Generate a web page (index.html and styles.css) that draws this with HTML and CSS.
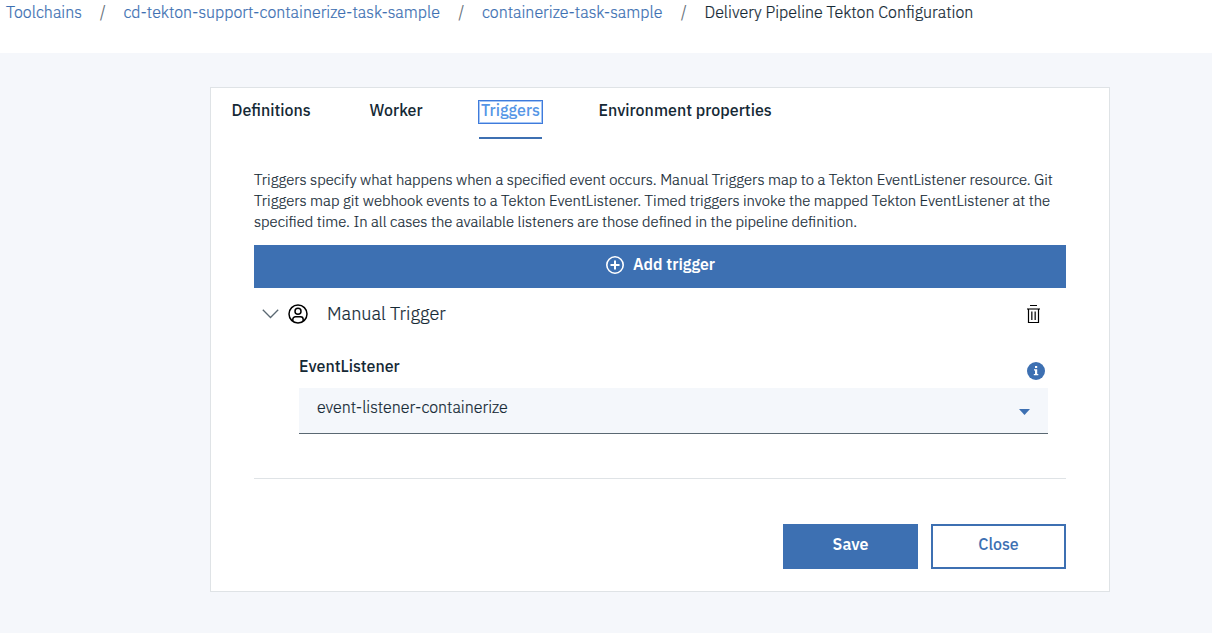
FILE: index.html
```html
<!DOCTYPE html>
<html lang="en">
<head>
<meta charset="utf-8">
<title>Delivery Pipeline Tekton Configuration</title>
<link rel="stylesheet" href="styles.css">
</head>
<body>
<nav class="crumbs">
  <a class="crumb crumb-root">Toolchains</a><span class="slash">/</span>
  <a class="crumb crumb-chain">cd-tekton-support-containerize-task-sample</a><span class="slash">/</span>
  <a class="crumb crumb-pipe">containerize-task-sample</a><span class="slash">/</span>
  <span class="crumb-current">Delivery Pipeline Tekton Configuration</span>
</nav>
<main class="card">
  <div class="tabs">
    <div class="tab tab-definitions">Definitions</div>
    <div class="tab tab-worker">Worker</div>
    <div class="tab tab-active"><span class="focus">Triggers</span></div>
    <div class="tab tab-env">Environment properties</div>
  </div>
  <div class="content">
    <p class="intro">Triggers specify what happens when a specified event occurs. Manual Triggers map to a Tekton EventListener resource. Git<br>Triggers map git webhook events to a Tekton EventListener. Timed triggers invoke the mapped Tekton EventListener at the<br>specified time. In all cases the available listeners are those defined in the pipeline definition.</p>
    <div class="add">
      <svg width="20" height="20" viewBox="0 0 20 20" fill="none" stroke="#fff"><circle cx="10" cy="10" r="8.2" stroke-width="1.6"/><path d="M10 5.5v9M5.5 10h9" stroke-width="2"/></svg>
      <span class="add-label">Add trigger</span>
    </div>
    <div class="trigger">
      <svg class="chevron" width="17" height="10" viewBox="0 0 17 10" fill="none" stroke="#5a6872" stroke-width="1.3"><path d="M.8.8l7.7 7.7L16.200.8"/></svg>
      <svg class="user" width="20" height="20" viewBox="0 0 20 20" fill="none" stroke="#000" stroke-width="1.5"><circle cx="10" cy="10" r="9"/><circle cx="10" cy="7.300" r="3"/><path d="M4.800 17v-1.500a2.700 2.700 0 0 1 2.700-2.700h5a2.700 2.700 0 0 1 2.700 2.700V17"/></svg>
      <span class="trigger-name">Manual Trigger</span>
      <svg class="trash" width="13" height="18" viewBox="0 0 13 18"><path d="M3 .5h7" stroke="#000"/><path d="M0 4h13" stroke="#444" stroke-width="1.500"/><path d="M1.500 4v13.500h10V4" fill="none" stroke="#000" stroke-width="1.200"/><path d="M4.800 6.500v8.500M8.200 6.500v8.500" stroke="#333" stroke-width="1.500"/></svg>
    </div>
    <div class="field-head">
      <span class="field-label">EventListener</span>
      <svg class="info" width="18" height="18" viewBox="0 0 18 18"><circle cx="9" cy="9" r="9" fill="#3d70b2"/><path d="M8 4h2.200v2H8zM7 7.300h3.200v4.700h1.100v1.200H6.800V12H8V8.500H7z" fill="#fff"/></svg>
    </div>
    <div class="select"><span class="select-value">event-listener-containerize</span><svg width="11" height="6" viewBox="0 0 11 6"><path d="M0 0h11L5.500 6z" fill="#3d70b2"/></svg></div>
    <div class="actions">
      <div class="btn save">Save</div>
      <div class="btn close">Close</div>
    </div>
  </div>
</main>
</body>
</html>
```
FILE: styles.css
```css
* { box-sizing: border-box; }
body {
  margin: 0;
  height: 633px;
  overflow: hidden;
  background: #f5f7fb;
  color: #152935;
  font-family: "IBM Plex Sans", Roboto, sans-serif;
  font-size: 16px;
  font-weight: 300;
  line-height: 21px;
}
svg { display: block; flex: none; }
.crumbs, .intro, .select-value, .trigger-name { -webkit-text-stroke: .2px currentColor; }
.crumbs {
  display: flex;
  height: 53px;
  padding: 2px 0 0 6px;
  background: #fff;
  white-space: nowrap;
}
.crumb { color: #3d70b2; }
.crumb-root { width: 94px; }
.crumb-chain { width: 335px; }
.crumb-pipe { width: 199px; }
.slash { width: 23.500px; color: #5a6872; }
.card {
  width: 900px;
  height: 505px;
  margin: 34px 0 0 210px;
  border: 1px solid #dfe3e6;
  background: #fff;
}
.tabs {
  display: flex;
  height: 81px;
  padding: 12px 0 0 20.500px;
  font-weight: 500;
  white-space: nowrap;
}
.tab-definitions { width: 138px; }
.tab-worker { width: 109.500px; }
.tab-active {
  width: 63px;
  height: 39px;
  margin-right: 56.500px;
  border-bottom: 2px solid #3d70b2;
  color: #5596e6;
}
.focus {
  display: block;
  width: 65px;
  height: 24px;
  margin-left: -1px;
  padding-left: 1px;
  border: 1px solid #3f7bdb;
  line-height: 19px;
  padding-left: 2px;
  box-shadow: inset 0 0 0 1px #a5c6f5;
}
.content { padding: 0 43px; }
.intro { height: 76px; margin: 0; font-size: 14.840px; white-space: nowrap; }
.add {
  display: flex;
  justify-content: center;
  height: 43px;
  padding-top: 10px;
  gap: 8px;
  background: #3d70b2;
  color: #fff;
  font-weight: 600;
}
.add-label { line-height: 18px; font-size: 15.800px; }
.trigger { display: flex; height: 68px; padding-left: 8px; }
.chevron { margin-top: 21px; }
.user { margin: 16px 19px 0 9px; }
.trigger-name { font-size: 18.100px; line-height: 24px; margin-top: 13px; }
.trash { margin: 17px 26px 0 auto; }
.field-head { display: flex; justify-content: space-between; height: 32px; padding: 0 21px 0 45px; font-weight: 500; }
.info { margin-top: 6px; }
.select {
  display: flex;
  justify-content: space-between;
  height: 46px;
  margin: 0 18px 0 45px;
  padding: 9px 18px 0;
  border-bottom: 1px solid #5a6872;
  background: #f4f7fb;
}
.select svg { margin-top: 12px; }
.actions {
  display: flex;
  justify-content: flex-end;
  gap: 13px;
  margin-top: 44px;
  padding-top: 45px;
  border-top: 1px solid #dfe3e6;
}
.btn {
  width: 135px;
  height: 45px;
  border: 2px solid #3d70b2;
  line-height: 37px;
  text-align: center;
  font-weight: 600;
}
.save { background: #3d70b2; color: #fff; }
.close { color: #3d70b2; font-weight: 500; }
```
